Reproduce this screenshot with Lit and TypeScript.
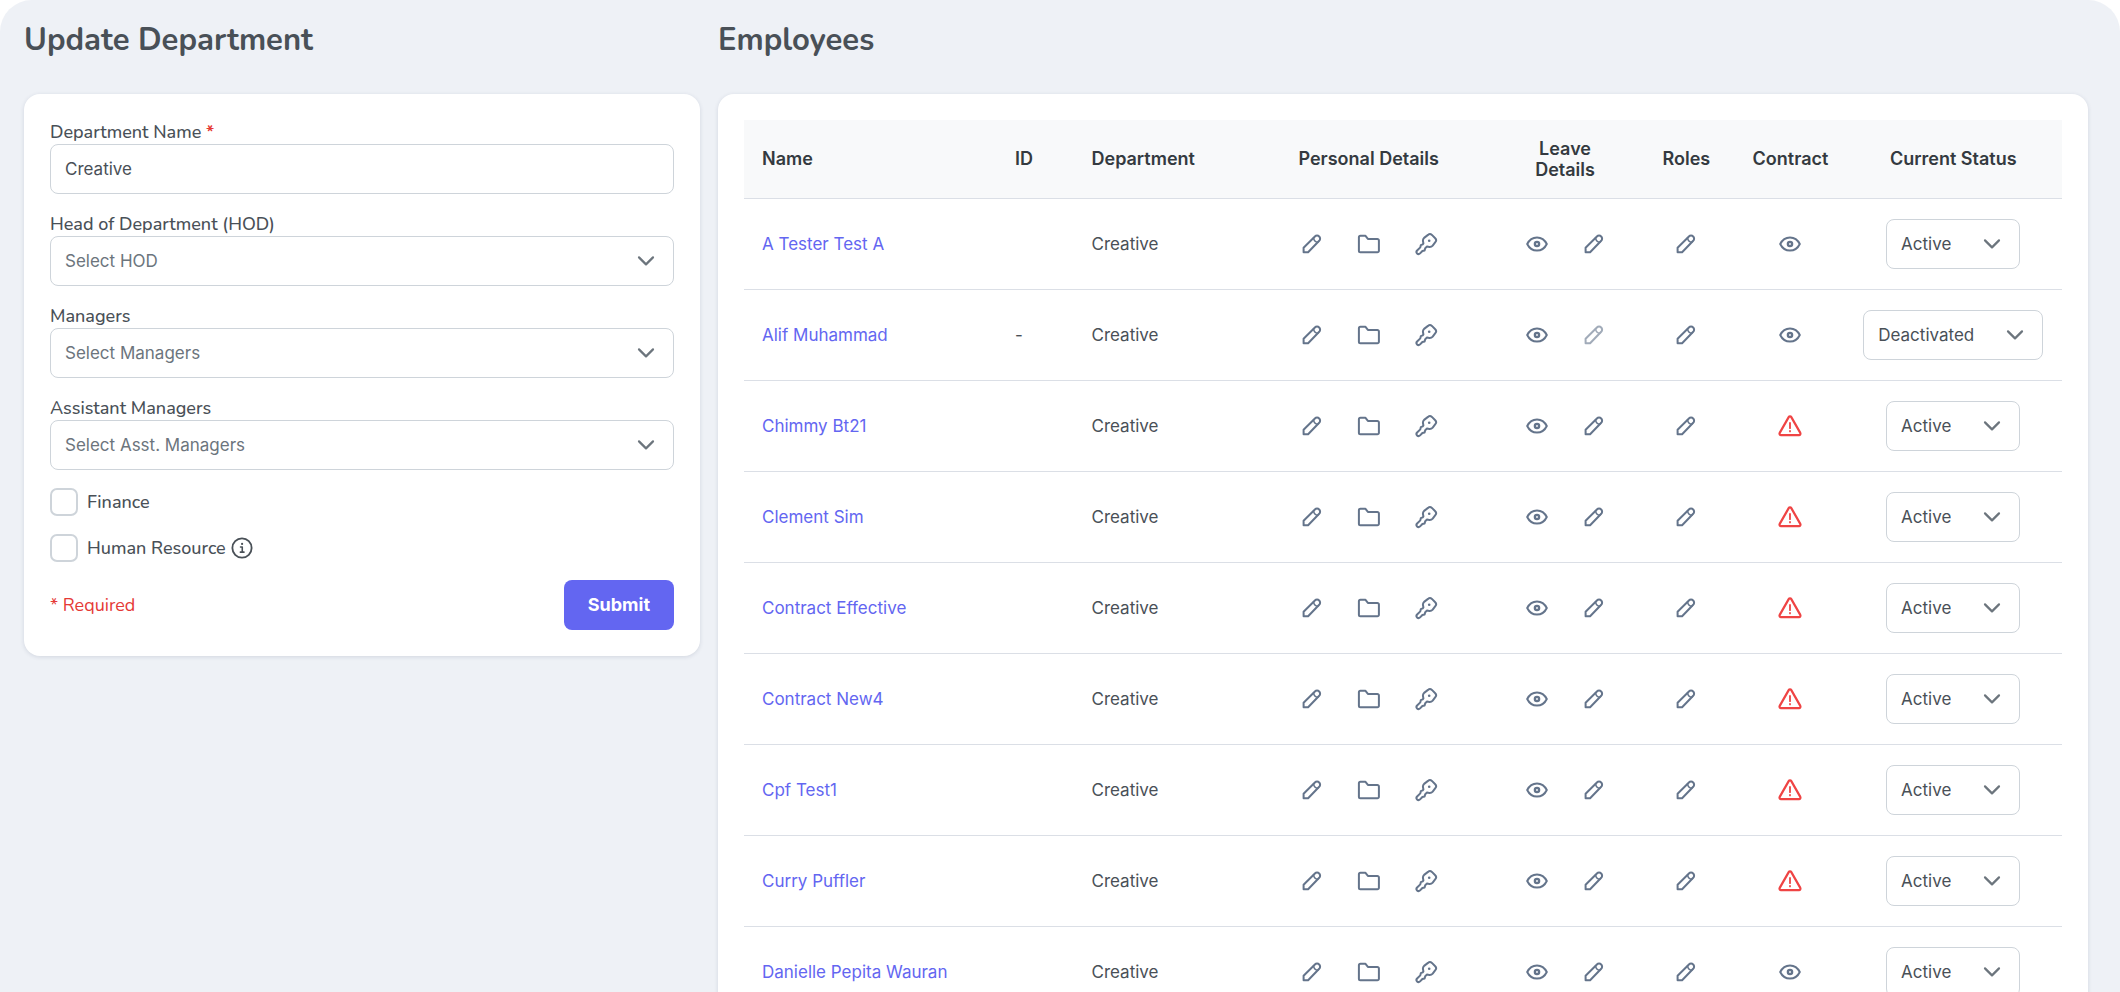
import { LitElement, html, css, svg } from "lit";
import { customElement, property, state } from "lit/decorators.js";

type IconName = "pencil" | "folder" | "key" | "eye" | "warning" | "chevron" | "info";

interface Employee {
  name: string;
  id?: string;
  department: string;
  contract: boolean;
  leaveLocked?: boolean;
  status: string;
}

const STATUSES = ["Active", "Deactivated"];

const EMPLOYEES: Employee[] = [
  { name: "A Tester Test A", department: "Creative", contract: true, status: "Active" },
  { name: "Alif Muhammad", id: "-", department: "Creative", contract: true, leaveLocked: true, status: "Deactivated" },
  { name: "Chimmy Bt21", department: "Creative", contract: false, status: "Active" },
  { name: "Clement Sim", department: "Creative", contract: false, status: "Active" },
  { name: "Contract Effective", department: "Creative", contract: false, status: "Active" },
  { name: "Contract New4", department: "Creative", contract: false, status: "Active" },
  { name: "Cpf Test1", department: "Creative", contract: false, status: "Active" },
  { name: "Curry Puffler", department: "Creative", contract: false, status: "Active" },
  { name: "Danielle Pepita Wauran", department: "Creative", contract: true, status: "Active" },
];

const ICONS = {
  pencil: svg`<path d="M3.6 20.2v-4.5L14.9 4.5a3 3 0 0 1 4.3 0a3 3 0 0 1 0 4.3L8.1 20.2Z"/><path d="M13.6 6c.3 2.4 1.7 3.9 4.2 4.2" stroke-width="1.6"/>`,
  folder: svg`<path d="M3.4 3.7h4.9l2.6 3.2h9.5a1.5 1.5 0 0 1 1.5 1.5v10.3a1.5 1.5 0 0 1-1.5 1.5h-17a1.5 1.5 0 0 1-1.5-1.500V5.2a1.5 1.5 0 0 1 1.5-1.5Z"/>`,
  key: svg`<path d="M14 2.9c1.1-1 2.8-1 3.9 0l3.3 3.3c1.1 1.1 1.1 2.8.1 4l-2.6 3.4c-.9 1-2.2 1.4-3.4 1.3l-2.3-.3l-1.8 1.7l-.6 2.2l-2.2.5l-2.3 2.4c-.9.9-2.200.9-3 .1s-.8-2.100 0-3l3.200-3.100l.5-2.200l1.900-.8l.7-1l-.4-2.100c-.2-1.200.2-2.500 1.100-3.400Z"/><circle cx="15.200" cy="8.800" r="1.300" fill="currentColor" stroke="none"/>`,
  eye: svg`<path d="M2.2 12c2-4.1 5.6-6.6 9.8-6.6s7.8 2.5 9.8 6.6c-2 4.1-5.6 6.6-9.8 6.6s-7.8-2.5-9.8-6.6Z"/><circle cx="12" cy="12" r="2.1" stroke-width="2.4"/>`,
  warning: svg`<path d="M10.7 3.1a1.5 1.5 0 0 1 2.6 0l9 15.8a1.5 1.5 0 0 1-1.3 2.2H3a1.5 1.5 0 0 1-1.3-2.2Z" stroke-width="2.2"/><path d="M12 9v5.2M12 16.8v.6" stroke-width="1.8"/>`,
  chevron: svg`<path d="M5 8.4l7 7l7-7" stroke-width="2.2"/>`,
  info: svg`<circle cx="12" cy="12" r="10.5"/><path d="M10.4 10.9h1.9v5.2M10.2 16.5h4" stroke-width="1.7"/><circle cx="12.1" cy="7.6" r="1.2" fill="currentColor" stroke="none"/>`,
};

@customElement("ui-icon")
class UiIcon extends LitElement {
  @property() name: IconName = "pencil";

  static styles = css`
    :host { display: block; width: 24px; height: 24px; }
    svg {
      display: block;
      width: 100%;
      height: 100%;
      fill: none;
      stroke: currentColor;
      stroke-width: 2;
      stroke-linecap: round;
      stroke-linejoin: round;
    }
  `;

  render() {
    return html`<svg viewBox="0 0 24 24" aria-hidden="true">${ICONS[this.name]}</svg>`;
  }
}

@customElement("app-root")
class AppRoot extends LitElement {
  @state() employees = EMPLOYEES;

  static styles = css`
    :host {
      display: block;
      background: #fff;
      color: #495057;
      font: 17px/24px Inter, "Liberation Sans", sans-serif;
    }
    *, *::before, *::after { box-sizing: border-box; }
    .page {
      height: 100vh;
      overflow: auto;
      scrollbar-width: none;
      padding: 0 32px 0 24px;
      border-radius: 32px 32px 0 0;
      background: #eef1f6;
    }
    .layout {
      display: grid;
      grid-template-columns: repeat(3, minmax(0, 1fr));
      gap: 18px;
      align-items: start;
    }
    .wide { grid-column: span 2; }
    .title {
      margin: 0;
      padding: 20px 0 34px;
      font: 700 31px/40px Nunito, "Noto Sans", sans-serif;
    }
    .card {
      padding: 26px;
      border-radius: 16px;
      background: #fff;
      box-shadow: 0 1px 4px rgba(40, 60, 90, 0.14);
    }
    .form {
      display: flex;
      flex-direction: column;
      gap: 18px;
      font-family: Nunito, "Noto Sans", sans-serif;
    }
    .field { display: flex; flex-direction: column; }
    .label { font-size: 18px; font-weight: 500; }
    .star { color: #e53935; font-weight: 700; }
    .control {
      width: 100%;
      height: 50px;
      margin: 0;
      padding: 0 14px;
      border: 1px solid #ced4da;
      border-radius: 8px;
      background: #fff;
      color: #495057;
      font: 17px/24px Inter, "Liberation Sans", sans-serif;
      appearance: none;
    }
    .placeholder { color: #6c757d; }
    .select { position: relative; display: flex; }
    .select .control { padding-right: 68px; }
    .chevron {
      position: absolute;
      top: 13px;
      right: 16px;
      color: #6c757d;
      pointer-events: none;
    }
    .check {
      display: flex;
      align-items: center;
      gap: 9px;
      height: 28px;
    }
    .box {
      width: 28px;
      height: 28px;
      margin: 0;
      border: 2px solid #ced4da;
      border-radius: 7px;
      background: #fff;
      appearance: none;
    }
    .box:checked { border-color: #6366f1; background: #6366f1; }
    .hint {
      margin-left: -4px;
      padding: 0;
      border: 0;
      background: none;
      color: #495057;
    }
    .hint-icon { width: 22px; height: 22px; }
    .footer {
      display: flex;
      align-items: center;
      justify-content: space-between;
    }
    .required { color: #e53935; font-size: 18px; }
    .submit {
      height: 50px;
      padding: 0 24px;
      border: 0;
      border-radius: 8px;
      background: #6366f1;
      color: #fff;
      font: 700 18px/24px Inter, "Liberation Sans", sans-serif;
    }
    .table {
      width: 100%;
      border-collapse: collapse;
      table-layout: fixed;
    }
    .c-name { width: 19.2%; }
    .c-id { width: 5.8%; }
    .c-dept { width: 12.9%; }
    .c-personal { width: 19%; }
    .c-leave { width: 10.8%; }
    .c-roles { width: 7.6%; }
    .c-contract { width: 8.2%; }
    .c-status { width: 16.5%; }
    th {
      height: 78px;
      padding: 17px 15px;
      border-bottom: 1px solid #dbdfe6;
      background: #f8f9fa;
      color: #343a40;
      font-size: 18px;
      font-weight: 600;
      line-height: 21px;
    }
    td {
      height: 91px;
      padding: 0 18px;
      border-bottom: 1px solid #dbdfe6;
      vertical-align: middle;
    }
    .start { padding-left: 18px; text-align: left; }
    .name { color: #6366f1; text-decoration: none; }
    .actions {
      display: flex;
      justify-content: center;
      gap: 33px;
    }
    .action {
      display: block;
      padding: 0;
      border: 0;
      background: none;
      color: #64748b;
    }
    .action:disabled { opacity: 0.6; }
    .action.alert { color: #ef4444; }
    .status { width: fit-content; margin: 0 auto; }
    .status .control { width: auto; field-sizing: content; }
  `;

  private action(icon: IconName, label: string, disabled = false, alert = false) {
    return html`<button class="action ${alert ? "alert" : ""}" type="button" aria-label=${label} ?disabled=${disabled}>
      <ui-icon name=${icon}></ui-icon>
    </button>`;
  }

  private picker(id: string, label: string, placeholder: string) {
    return html`<div class="field">
      <label class="label" for=${id}>${label}</label>
      <div class="select">
        <select class="control placeholder" id=${id}><option>${placeholder}</option></select>
        <ui-icon class="chevron" name="chevron"></ui-icon>
      </div>
    </div>`;
  }

  private row(e: Employee) {
    return html`<tr>
      <td><a class="name" href="#">${e.name}</a></td>
      <td>${e.id ?? ""}</td>
      <td>${e.department}</td>
      <td><div class="actions">
        ${this.action("pencil", "Edit personal details")}
        ${this.action("folder", "Open documents")}
        ${this.action("key", "Reset password")}
      </div></td>
      <td><div class="actions">
        ${this.action("eye", "View leave")}
        ${this.action("pencil", "Edit leave", e.leaveLocked)}
      </div></td>
      <td><div class="actions">${this.action("pencil", "Edit roles")}</div></td>
      <td><div class="actions">
        ${e.contract
          ? this.action("eye", "View contract")
          : this.action("warning", "Contract missing", false, true)}
      </div></td>
      <td><div class="select status">
        <select class="control" aria-label="Current status of ${e.name}">
          ${STATUSES.map((s) => html`<option ?selected=${s === e.status}>${s}</option>`)}
        </select>
        <ui-icon class="chevron" name="chevron"></ui-icon>
      </div></td>
    </tr>`;
  }

  render() {
    return html`<main class="page">
      <div class="layout">
        <section>
          <h1 class="title">Update Department</h1>
          <form class="card form">
            <div class="field">
              <label class="label" for="name">Department Name <span class="star">*</span></label>
              <input class="control" id="name" type="text" value="Creative" required />
            </div>
            ${this.picker("hod", "Head of Department (HOD)", "Select HOD")}
            ${this.picker("managers", "Managers", "Select Managers")}
            ${this.picker("assistants", "Assistant Managers", "Select Asst. Managers")}
            <div class="check">
              <input class="box" id="finance" type="checkbox" />
              <label class="label" for="finance">Finance</label>
            </div>
            <div class="check">
              <input class="box" id="hr" type="checkbox" />
              <label class="label" for="hr">Human Resource</label>
              <button class="hint" type="button" aria-label="About Human Resource"><ui-icon class="hint-icon" name="info"></ui-icon></button>
            </div>
            <div class="footer">
              <span class="required">* Required</span>
              <button class="submit" type="button">Submit</button>
            </div>
          </form>
        </section>
        <section class="wide">
          <h1 class="title">Employees</h1>
          <div class="card">
            <table class="table">
              <colgroup>
                <col class="c-name" /><col class="c-id" /><col class="c-dept" /><col class="c-personal" />
                <col class="c-leave" /><col class="c-roles" /><col class="c-contract" /><col class="c-status" />
              </colgroup>
              <thead>
                <tr>
                  <th class="start">Name</th>
                  <th class="start">ID</th>
                  <th class="start">Department</th>
                  <th>Personal Details</th>
                  <th>Leave Details</th>
                  <th>Roles</th>
                  <th>Contract</th>
                  <th>Current Status</th>
                </tr>
              </thead>
              <tbody>${this.employees.map((e) => this.row(e))}</tbody>
            </table>
          </div>
        </section>
      </div>
    </main>`;
  }
}
